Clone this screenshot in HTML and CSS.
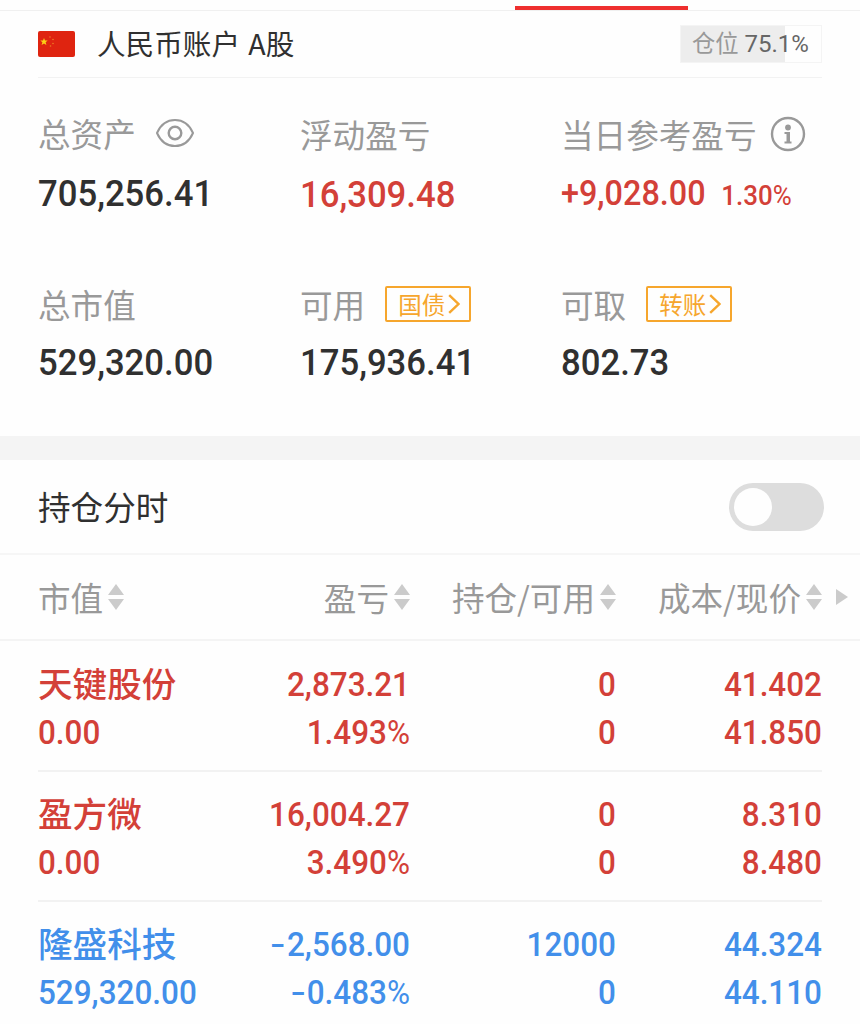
FILE: index.html
```html
<!DOCTYPE html>
<html lang="zh-CN">
<head>
<meta charset="utf-8">
<title>持仓</title>
<link rel="stylesheet" href="styles.css">
</head>
<body>
<svg width="0" height="0" class="defs">
  <symbol id="sort" viewBox="0 0 16 26"><path d="M8 0L16 11H0zM0 15H16L8 26z" fill="#cbcbcb"/></symbol>
  <symbol id="chevron" viewBox="0 0 12 20"><path d="M1.2 1.2L10.4 10L1.2 18.8" fill="none" stroke="#f6a62d" stroke-width="2.4"/></symbol>
</svg>
<main class="page">
  <div class="tabs"><div class="tab-line"></div></div>
  <header class="account">
    <svg class="flag" width="37" height="26" viewBox="0 0 37 26"><rect width="37" height="26" rx="2" fill="#df2410"/><path d="M6 7l1 2.5 2.7.1-2.1 1.7.8 2.6L6 12.400l-2.400 1.500.8-2.600-2.100-1.700 2.700-.1z" fill="#fbd116"/><g fill="#ee7a24"><circle cx="12" cy="6" r=".8"/><circle cx="15" cy="8.500" r=".8"/><circle cx="15" cy="12.500" r=".8"/><circle cx="12.500" cy="15" r=".8"/></g></svg>
    <h1 class="account-name">人民币账户 A股</h1>
    <div class="position"><span class="position-label">仓位</span> <span>75.1%</span></div>
  </header>
  <section class="summary">
    <div class="stat">
      <div class="label label-first">总资产<svg class="eye" width="38" height="28" viewBox="0 0 38 28" fill="none" stroke="#999" stroke-width="2"><path d="M1 14C4.500 6 11 1 19 1S33.500 6 37 14C33.500 22 27 27 19 27S4.500 22 1 14Z"/><circle cx="19" cy="14" r="6.300" stroke-width="2.400"/></svg></div>
      <div class="value">705,256.41</div>
    </div>
    <div class="stat">
      <div class="label">浮动盈亏</div>
      <div class="value up">16,309.48</div>
    </div>
    <div class="stat">
      <div class="label">当日参考盈亏<svg class="info" width="36" height="36" viewBox="0 0 36 36"><circle cx="18" cy="18" r="16" fill="none" stroke="#999" stroke-width="2.400"/><circle cx="18" cy="11.500" r="2.900" fill="#999"/><path d="M14.500 16H20V25.500H21.500V27.500H14.500V25.500H16.500V18H14.500Z" fill="#999"/></svg></div>
      <div class="value value-day up">+9,028.00<span class="rate">1.30<span class="pct">%</span></span></div>
    </div>
    <div class="stat stat-low">
      <div class="label">总市值</div>
      <div class="value">529,320.00</div>
    </div>
    <div class="stat stat-low">
      <div class="label">可用<span class="action">国债<svg width="12" height="20"><use href="#chevron"/></svg></span></div>
      <div class="value">175,936.41</div>
    </div>
    <div class="stat stat-low">
      <div class="label">可取<span class="action">转账<svg width="12" height="20"><use href="#chevron"/></svg></span></div>
      <div class="value">802.73</div>
    </div>
  </section>
  <section class="intraday">
    <h2 class="intraday-title">持仓分时</h2>
    <div class="toggle"><div class="knob"></div></div>
  </section>
  <div class="columns">
    <div class="col">市值<svg class="sort"><use href="#sort"/></svg></div>
    <div class="col">盈亏<svg class="sort"><use href="#sort"/></svg></div>
    <div class="col">持仓/可用<svg class="sort"><use href="#sort"/></svg></div>
    <div class="col">成本/现价<svg class="sort"><use href="#sort"/></svg></div>
    <svg class="more" width="12" height="16" viewBox="0 0 12 16"><path d="M0 0L12 8L0 16z" fill="#cbcbcb"/></svg>
  </div>
  <section class="holdings">
    <div class="holding up">
      <div class="name">天键股份</div><div>2,873.21</div><div>0</div><div>41.402</div>
      <div>0.00</div><div>1.493<span class="pct">%</span></div><div>0</div><div>41.850</div>
    </div>
    <div class="holding up">
      <div class="name">盈方微</div><div>16,004.27</div><div>0</div><div>8.310</div>
      <div>0.00</div><div>3.490<span class="pct">%</span></div><div>0</div><div>8.480</div>
    </div>
    <div class="holding down">
      <div class="name">隆盛科技</div><div><span class="minus">-</span>2,568.00</div><div>12000</div><div>44.324</div>
      <div>529,320.00</div><div><span class="minus">-</span>0.483<span class="pct">%</span></div><div>0</div><div>44.110</div>
    </div>
  </section>
</main>
</body>
</html>
```
FILE: styles.css
```css
* { box-sizing: border-box; }
body { margin: 0; background: #fefefe; overflow: hidden; }
.defs { position: absolute; }
.page {
  width: 860px;
  height: 1024px;
  overflow: hidden;
  color: #303030;
  font-family: "Noto Sans CJK SC", sans-serif;
}
.tabs { height: 11px; padding: 6px 0 0 515px; border-bottom: 1px solid #f0f0f0; }
.tab-line { width: 173px; height: 4px; background: #ee2f2e; }
.account {
  display: flex;
  align-items: center;
  height: 67px;
  margin: 0 38px;
  border-bottom: 1px solid #f2f2f2;
}
.account-name {
  flex: 1;
  margin: -2px 0 0 22px;
  font-size: 28.6px;
  font-weight: 400;
  line-height: 40px;
  word-spacing: 2px;
}
.position {
  width: 142px;
  height: 38px;
  margin-top: -1px;
  padding-left: 11px;
  border: 1px solid #f4f4f4;
  background: linear-gradient(90deg, #ededed 74%, #fefefe 74%);
  color: #666;
  font-family: Roboto, "Noto Sans CJK SC", sans-serif;
  font-size: 24px;
  line-height: 37px;
  white-space: nowrap;
}
.position-label { color: #999; font-size: 23.3px; }
.summary {
  display: grid;
  grid-template-columns: 262px 261px 1fr;
  grid-template-rows: 170px 188px;
  padding-left: 38px;
}
.stat { padding-top: 33px; }
.label {
  display: flex;
  align-items: center;
  height: 46px;
  color: #999;
  font-size: 32.6px;
  line-height: 46px;
  white-space: nowrap;
}
.label-first { height: 44px; margin-bottom: 2px; }
.eye { margin-left: 20px; }
.info { margin-left: 14px; }
.value {
  height: 72px;
  margin-top: 1px;
  color: #303030;
  font-family: Roboto, sans-serif;
  font-size: 37.5px;
  font-weight: 500;
  line-height: 72px;
  white-space: nowrap;
  transform: scaleX(.925);
  transform-origin: left center;
}
.stat-low .value { margin-top: -1px; }
.value-day { font-size: 35px; }
.rate { margin-left: 17px; font-size: 28px; }
.up, .value.up { color: #d34038; }
.down { color: #428fea; }
.pct { font-weight: 400; }
.action {
  display: flex;
  align-items: center;
  gap: 3px;
  width: 86px;
  height: 36px;
  margin-left: 20px;
  padding-left: 11px;
  border: 2px solid #f6a62d;
  border-radius: 2px;
  color: #f6a62d;
  font-size: 23.5px;
  line-height: 32px;
}
.intraday {
  display: flex;
  align-items: center;
  justify-content: space-between;
  height: 119px;
  padding: 0 36px 0 38px;
  border-top: 24px solid #f4f4f4;
  border-bottom: 2px solid #f6f6f6;
}
.intraday-title { margin: -2px 0 0; font-size: 32.6px; font-weight: 400; line-height: 48px; }
.toggle { width: 95px; height: 48px; padding: 5px; border-radius: 24px; background: #ddd; }
.knob { width: 38px; height: 38px; border-radius: 50%; background: #fefefe; }
.columns {
  display: grid;
  grid-template-columns: 166px 206px 206px 206px 1fr;
  align-items: center;
  height: 86px;
  padding-left: 38px;
  border-bottom: 2px solid #f4f4f4;
}
.col {
  display: flex;
  align-items: center;
  justify-content: flex-end;
  gap: 5px;
  height: 46px;
  color: #999;
  font-size: 32.6px;
  line-height: 44px;
  white-space: nowrap;
}
.col:first-child { justify-content: flex-start; }
.sort { width: 16px; height: 26px; }
.more { margin-left: 14px; }
.holdings { padding: 1px 38px 0; }
.holding {
  display: grid;
  grid-template-columns: 166px 206px 206px 206px;
  grid-auto-rows: 48px;
  height: 130px;
  padding-top: 18px;
  border-bottom: 2px solid #f2f2f2;
  font-family: Roboto, sans-serif;
  font-size: 34px;
  font-weight: 500;
  line-height: 48px;
  text-align: right;
  white-space: nowrap;
}
.holding > div { transform: scaleX(.925); transform-origin: right center; }
.holding > :nth-child(4n + 1) { text-align: left; transform-origin: left center; }
.holding > .name {
  font-family: "Noto Sans CJK SC", sans-serif;
  font-size: 34.6px;
  line-height: 45px;
  transform: none;
}
.minus {
  display: inline-block;
  margin-right: 6px;
  transform: scaleX(1.4);
  transform-origin: left center;
}
```
